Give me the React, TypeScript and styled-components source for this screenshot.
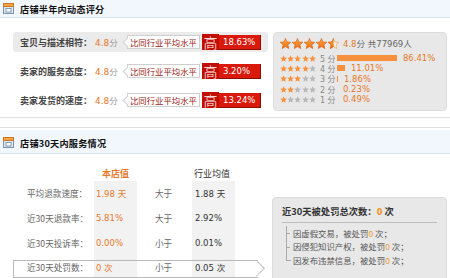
import React, { FC } from 'react'
import styled, { createGlobalStyle } from 'styled-components'

const GlobalStyle = createGlobalStyle`
  html, body {
    margin: 0;
    padding: 0;
    background: #fff;
  }
  body {
    font-family: 'DejaVu Sans', 'Noto Sans CJK SC', sans-serif;
    color: #333;
  }
`

const ORANGE = '#e9782a'

interface ScoreRow {
  label: string
  score: string
  pct: string
  active?: boolean
}

interface Dist {
  stars: number
  pct: number
}

interface ServiceRow {
  label: string
  value: string
  cmp: string
  industry: string
}

const scores: ScoreRow[] = [
  { label: '宝贝与描述相符：', score: '4.8', pct: '18.63%', active: true },
  { label: '卖家的服务态度：', score: '4.8', pct: '3.20%' },
  { label: '卖家发货的速度：', score: '4.8', pct: '13.24%' },
]

const dists: Dist[] = [
  { stars: 5, pct: 86.41 },
  { stars: 4, pct: 11.01 },
  { stars: 3, pct: 1.86 },
  { stars: 2, pct: 0.23 },
  { stars: 1, pct: 0.49 },
]

const services: ServiceRow[] = [
  { label: '平均退款速度：', value: '1.98 天', cmp: '大于', industry: '1.88 天' },
  { label: '近30天退款率：', value: '5.81%', cmp: '大于', industry: '2.92%' },
  { label: '近30天投诉率：', value: '0.00%', cmp: '小于', industry: '0.01%' },
  { label: '近30天处罚数：', value: '0 次', cmp: '小于', industry: '0.05 次' },
]

const penalties = ['因虚假交易，被处罚 ', '因侵犯知识产权，被处罚 ', '因发布违禁信息，被处罚 ']

const Page = styled.div`
  width: 450px;
  overflow: hidden;
`

const Section = styled.section<{ top?: boolean }>`
  ${({ top }) =>
    top
      ? `border-bottom: 1px solid #e2e2e2;`
      : `margin-top: 9px; border-top: 1px solid #dedede; padding-top: 2px;`}
`

const Header = styled.div<{ tall?: boolean }>`
  height: ${({ tall }) => (tall ? 24 : 18)}px;
  padding-top: ${({ tall }) => (tall ? 2 : 0)}px;
  box-sizing: border-box;
  display: flex;
  align-items: center;
  gap: 6px;
  padding-left: 3px;
  background: #f2f6fd;
  border-bottom: 1px solid #dbe3ee;
`

const Title = styled.h2`
  margin: 0;
  font-size: 9.2px;
  font-weight: bold;
  color: #111;
  font-family: 'Noto Sans CJK SC', sans-serif;
  letter-spacing: 0.2px;
`

const Body = styled.div<{ pt: number; pb?: number }>`
  display: flex;
  padding: ${({ pt }) => pt}px 3px ${({ pb }) => pb || 0}px 13px;
`

const ScoreList = styled.div`
  width: 255px;
  display: flex;
  flex-direction: column;
  gap: 9px;
`

const ScoreLine = styled.div<{ active?: boolean }>`
  height: 20px;
  display: flex;
  align-items: center;
  padding-left: 7px;
  border-radius: 3px;
  background: ${({ active }) => (active ? '#ebebeb' : 'transparent')};
`

const ScoreLabel = styled.span`
  width: 75px;
  font-family: 'Noto Sans CJK SC', sans-serif;
  font-size: 9px;
  font-weight: bold;
  color: #444;
`

const ScoreValue = styled.span`
  width: 28px;
  font-size: 9px;
  color: ${ORANGE};
  white-space: nowrap;
  & small {
    font-family: 'Noto Sans CJK SC', sans-serif;
    font-size: 8.5px;
    color: #999;
  }
`

const CompareTag = styled.span`
  position: relative;
  height: 14px;
  width: 73px;
  margin-left: 4px;
  box-sizing: border-box;
  border: 1px solid #cfcfcf;
  background: #fff;
  font-family: 'Noto Sans CJK SC', sans-serif;
  font-size: 8.4px;
  color: #9b1a12;
  display: flex;
  align-items: center;
  justify-content: center;
  &::before {
    content: '';
    position: absolute;
    left: -4px;
    top: 2.5px;
    width: 6px;
    height: 6px;
    background: #fff;
    border-left: 1px solid #cfcfcf;
    border-bottom: 1px solid #cfcfcf;
    transform: rotate(45deg);
  }
`

const HighBox = styled.span`
  margin-left: 2px;
  width: 17px;
  height: 16px;
  background: #c20d02;
  color: #fff;
  font-family: 'Noto Sans CJK SC', sans-serif;
  font-size: 14px;
  line-height: 16px;
  text-align: center;
  font-weight: 300;
`

const PctBox = styled.span`
  width: 42px;
  height: 15px;
  box-sizing: border-box;
  background: #d8190b;
  border-bottom: 1px solid #8d0c04;
  border-right: 1px solid #8d0c04;
  color: #fff;
  font-size: 8.5px;
  padding-left: 4px;
  display: flex;
  align-items: center;
`

const Panel = styled.div<{ mt?: number; w: number; ml: number }>`
  margin-top: ${({ mt }) => mt || 0}px;
  margin-left: ${({ ml }) => ml}px;
  width: ${({ w }) => w}px;
  box-sizing: border-box;
  background: #e8e8e8;
  border: 1px solid #dcdcdc;
  border-radius: 4px;
`

const RatingPanel = styled(Panel)`
  height: 79px;
  padding: 2px 0 0 6px;
`

const BigStarsRow = styled.div`
  height: 16px;
  display: flex;
  align-items: center;
  gap: 4px;
  margin-bottom: 2px;
`

const StarGroup = styled.span<{ gap: number }>`
  display: flex;
  gap: ${({ gap }) => gap}px;
`

const Summary = styled.span`
  font-size: 8.5px;
  color: #666;
  font-family: 'DejaVu Sans', 'Noto Sans CJK SC', sans-serif;
  & b {
    font-weight: normal;
    color: ${ORANGE};
  }
`

const DistRow = styled.div`
  height: 10.3px;
  display: flex;
  align-items: center;
`

const DistLabel = styled.span`
  width: 14px;
  margin-left: 4px;
  margin-right: 3px;
  font-size: 8px;
  color: #888;
  white-space: nowrap;
`

const Bar = styled.span`
  height: 6px;
  background: #f7913d;
  margin-right: 6px;
`

const DistPct = styled.span`
  font-size: 8.5px;
  color: ${ORANGE};
`

const TableWrap = styled.div`
  position: relative;
  width: 255px;
`

const Table = styled.div`
  display: grid;
  grid-template-columns: 81px 43px 55px 43px 1fr;
  grid-template-rows: 15px repeat(4, 24.7px);
  font-size: 8.5px;
`

const Cell = styled.div<{ shade?: boolean; pl?: number; head?: boolean }>`
  display: flex;
  align-items: center;
  padding-left: ${({ pl }) => pl || 0}px;
  background: ${({ shade }) => (shade ? '#f2f2f2' : 'transparent')};
  color: ${({ head }) => (head ? '#333' : '#555')};
  font-family: 'DejaVu Sans', 'Noto Sans CJK SC', sans-serif;
  white-space: nowrap;
`

const LabelCell = styled(Cell)`
  font-family: 'Noto Sans CJK SC', sans-serif;
  color: #666;
  font-size: 8.6px;
`

const OrangeCell = styled(Cell)`
  color: ${ORANGE};
`

const HeadOrange = styled(Cell)`
  justify-content: center;
  padding-left: 0;
  color: ${ORANGE};
  font-weight: bold;
  font-family: 'Noto Sans CJK SC', sans-serif;
  font-size: 9px;
`

const LabelHead = styled.span`
  font-family: 'Noto Sans CJK SC', sans-serif;
  font-size: 9px;
  color: #333;
`

const CurrentRow = styled.div`
  position: absolute;
  left: 0;
  top: 94px;
  width: 245px;
  height: 18px;
  box-sizing: border-box;
  border: 1px solid #b9b9b9;
  border-right: none;
  pointer-events: none;
  &::after {
    content: '';
    position: absolute;
    right: -5px;
    top: 0;
    width: 11px;
    height: 11px;
    border-top: 1px solid #b9b9b9;
    border-right: 1px solid #b9b9b9;
    transform: translateY(2px) rotate(45deg) scale(0.85, 1);
    transform-origin: center;
  }
`

const PenaltyPanel = styled(Panel)`
  height: 91px;
  padding: 6px 9px 0 9px;
`

const PenaltyTitle = styled.div`
  font-family: 'Noto Sans CJK SC', sans-serif;
  font-size: 9.3px;
  font-weight: bold;
  color: #333;
  padding-bottom: 4px;
  border-bottom: 1px solid #bdbdbd;
  & b {
    color: #f7941d;
  }
`

const PenaltyList = styled.ul`
  list-style: none;
  margin: 3px 0 0 4px;
  padding: 0;
  position: relative;
`

const PenaltyItem = styled.li<{ last?: boolean }>`
  position: relative;
  height: 13.5px;
  padding-left: 6px;
  display: flex;
  align-items: center;
  font-family: 'Noto Sans CJK SC', sans-serif;
  font-size: 8.4px;
  color: #555;
  border-left: 1px solid #aaa;
  ${({ last }) => last && `border-left-color: transparent;`}
  &::before {
    content: '';
    position: absolute;
    left: -1px;
    top: 0;
    width: 4px;
    height: 7px;
    border-bottom: 1px solid #aaa;
    ${({ last }) => last && `border-left: 1px solid #aaa;`}
  }
  & b {
    font-weight: normal;
    color: #f7941d;
    margin-right: 2px;
  }
`

const SectionIcon: FC = () => (
  <svg width="11" height="11" viewBox="0 0 11 11">
    <rect x="0.5" y="0.5" width="10" height="10" fill="#dfe9f6" stroke="#7d93b0" />
    <rect x="0.5" y="0.5" width="10" height="3" fill="#f3a545" stroke="#c8782a" />
    <rect x="3" y="5.5" width="5" height="3.5" fill="#fff" stroke="#6f86a6" strokeWidth="0.8" />
  </svg>
)

const STAR = '5,0.4 6.35,3.6 9.8,3.9 7.2,6.15 7.95,9.6 5,7.8 2.05,9.6 2.8,6.15 0.2,3.9 3.65,3.6'

const BigStar: FC<{ half?: boolean; id: string }> = ({ half, id }) => (
  <svg width="11" height="11" viewBox="0 0 10 10">
    <defs>
      <linearGradient id={id} x1="0" y1="0" x2="0" y2="1">
        <stop offset="0" stopColor="#ffae4a" />
        <stop offset="1" stopColor="#f06a0f" />
      </linearGradient>
      <clipPath id={id + 'c'}>
        <rect x="0" y="0" width="5.2" height="10" />
      </clipPath>
    </defs>
    {half ? (
      <>
        <polygon points={STAR} fill="#fff4e6" stroke="#e3a05a" strokeWidth="0.6" />
        <polygon points={STAR} fill={`url(#${id})`} stroke="#d2600c" strokeWidth="0.6" clipPath={`url(#${id}c)`} />
      </>
    ) : (
      <polygon points={STAR} fill={`url(#${id})`} stroke="#d2600c" strokeWidth="0.6" />
    )}
  </svg>
)

const SmallStar: FC<{ on: boolean }> = ({ on }) => (
  <svg width="7.2" height="7" viewBox="0 0 10 10">
    <polygon points={STAR} fill={on ? '#f7913d' : '#b8b8b8'} />
  </svg>
)

export default function App() {
  return (
    <Page>
      <GlobalStyle />
      <Section top>
        <Header>
          <SectionIcon />
          <Title>店铺半年内动态评分</Title>
        </Header>
        <Body pt={14} pb={6}>
          <ScoreList>
            {scores.map((s) => (
              <ScoreLine key={s.label} active={s.active}>
                <ScoreLabel>{s.label}</ScoreLabel>
                <ScoreValue>
                  {s.score}
                  <small>分</small>
                </ScoreValue>
                <CompareTag>比同行业平均水平</CompareTag>
                <HighBox>高</HighBox>
                <PctBox>{s.pct}</PctBox>
              </ScoreLine>
            ))}
          </ScoreList>
          <RatingPanel w={174} ml={5}>
            <BigStarsRow>
              <StarGroup gap={1}>
                {[0, 1, 2, 3, 4].map((i) => (
                  <BigStar key={i} id={'bs' + i} half={i === 4} />
                ))}
              </StarGroup>
              <Summary>
                <b>4.8</b>分 共77969人
              </Summary>
            </BigStarsRow>
            {dists.map((d) => (
              <DistRow key={d.stars}>
                <StarGroup gap={0}>
                  {[0, 1, 2, 3, 4].map((i) => (
                    <SmallStar key={i} on={i < d.stars} />
                  ))}
                </StarGroup>
                <DistLabel>{d.stars} 分</DistLabel>
                <Bar style={{ width: Math.round(d.pct * 0.7) }} />
                <DistPct>{d.pct.toFixed(2)}%</DistPct>
              </DistRow>
            ))}
          </RatingPanel>
        </Body>
      </Section>
      <Section>
        <Header tall>
          <SectionIcon />
          <Title>店铺30天内服务情况</Title>
        </Header>
        <Body pt={12}>
          <TableWrap>
            <Table>
              <Cell />
              <HeadOrange>本店值</HeadOrange>
              <Cell />
              <Cell head pl={2}>
                <LabelHead>行业均值</LabelHead>
              </Cell>
              <Cell />
              {services.map((r) => (
                <React.Fragment key={r.label}>
                  <LabelCell pl={14}>{r.label}</LabelCell>
                  <OrangeCell shade pl={2}>
                    {r.value}
                  </OrangeCell>
                  <LabelCell pl={18}>{r.cmp}</LabelCell>
                  <Cell shade pl={3} head>
                    {r.industry}
                  </Cell>
                  <Cell />
                </React.Fragment>
              ))}
            </Table>
            <CurrentRow />
          </TableWrap>
          <PenaltyPanel w={175} ml={4} mt={31}>
            <PenaltyTitle>
              近30天被处罚总次数：<b>0</b> 次
            </PenaltyTitle>
            <PenaltyList>
              {penalties.map((p, i) => (
                <PenaltyItem key={p} last={i === penalties.length - 1}>
                  {p}
                  <b>0</b>次；
                </PenaltyItem>
              ))}
            </PenaltyList>
          </PenaltyPanel>
        </Body>
      </Section>
    </Page>
  )
}
